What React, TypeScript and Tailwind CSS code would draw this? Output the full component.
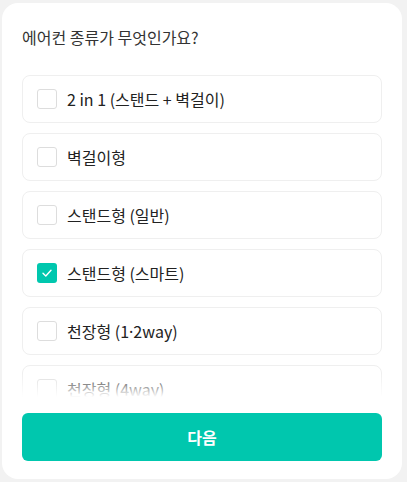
import { useState } from "react";

const options = [
  "2 in 1 (스탠드 + 벽걸이)",
  "벽걸이형",
  "스탠드형 (일반)",
  "스탠드형 (스마트)",
  "천장형 (1·2way)",
  "천장형 (4way)",
  "창문형",
];

// the CJK font draws · full width, so give it a Latin font
const Label = ({ text }: { text: string }) => {
  const parts = text.split("·");
  return (
    <>
      {parts.map((p, i) => (
        <span key={i}>
          {i > 0 && <span style={{ fontFamily: '"Noto Sans", sans-serif' }}>·</span>}
          {p}
        </span>
      ))}
    </>
  );
};

const App = () => {
  const [checked, setChecked] = useState<number[]>([3]);

  const toggle = (i: number) => {
    setChecked((prev) =>
      prev.includes(i) ? prev.filter((x) => x !== i) : [...prev, i]
    );
  };

  return (
    <div
      className="w-[407px] h-[482px] bg-[#f2f2f2] pt-[3px] pl-[2px]"
      style={{ fontFamily: '"Noto Sans CJK KR", "Noto Sans", sans-serif' }}
    >
      <div className="w-[400px] h-[476px] bg-white rounded-[16px] px-5 pt-5 pb-[18px] flex flex-col">
        <h2 className="text-[16px] leading-[28px] text-[#333] font-normal">
          에어컨 종류가 무엇인가요?
        </h2>

        <div className="relative mt-6 h-[322px] overflow-hidden">
          <ul className="flex flex-col gap-[10px]">
            {options.map((label, i) => {
              const on = checked.includes(i);
              return (
                <li
                  key={label}
                  onClick={() => toggle(i)}
                  className="h-12 shrink-0 border border-[#efefef] rounded-lg flex items-center gap-[10px] px-[14px] cursor-pointer"
                >
                  <span
                    className={
                      on
                        ? "w-5 h-5 rounded-[3px] bg-[#00c7ae] flex items-center justify-center"
                        : "w-5 h-5 rounded-[3px] border border-[#dddddd] bg-white"
                    }
                  >
                    {on && (
                      <svg width="12" height="12" viewBox="0 0 12 12" fill="none">
                        <path
                          d="M2 6.2 L4.8 9 L10 3.2"
                          stroke="white"
                          strokeWidth="1.4"
                          strokeLinecap="round"
                          strokeLinejoin="round"
                        />
                      </svg>
                    )}
                  </span>
                  <span className="text-[16px] text-[#222] leading-[22px]">
                    <Label text={label} />
                  </span>
                </li>
              );
            })}
          </ul>
          <div className="pointer-events-none absolute left-0 right-0 bottom-0 h-6 bg-gradient-to-b from-white/0 to-white" />
        </div>

        <button
          type="button"
          className="mt-4 h-12 w-full rounded-md bg-[#00c7ae] text-white text-[16px] leading-[22px] font-bold"
        >
          다음
        </button>
      </div>
    </div>
  );
};

export default App;
